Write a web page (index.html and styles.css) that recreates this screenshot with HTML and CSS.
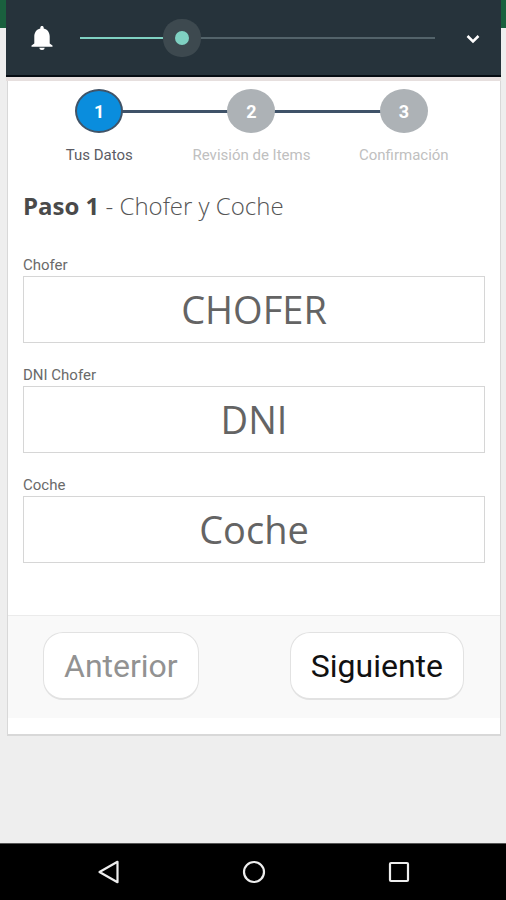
FILE: index.html
```html
<!DOCTYPE html>
<html lang="es">
<head>
<meta charset="utf-8">
<meta name="viewport" content="width=device-width, initial-scale=1">
<title>Paso 1 - Chofer y Coche</title>
<link rel="stylesheet" href="styles.css">
</head>
<body>
<div class="topbar"></div>
<section class="volume" aria-label="Volumen">
  <svg class="volume-icon" viewBox="0 0 24 24" aria-hidden="true"><path d="M12 24c1.500 0 2.600-1 2.600-2.300H9.400C9.400 23 10.500 24 12 24z"/><path d="M12 0c-1 0-1.700.7-1.700 1.700v.8C6.500 3.400 4.300 6.500 4.300 10.500v7L1.500 19.500v1.300h21v-1.300l-2.800-2v-7c0-4-2.200-7.100-6-8v-.8C13.700.7 13 0 12 0z"/></svg>
  <input class="volume-range" type="range" min="0" max="100" value="28" aria-label="Volumen de notificaciones">
  <button class="volume-more" type="button" aria-label="Expandir"><svg viewBox="0 0 24 24" aria-hidden="true"><path d="M6.500 10l5.500 5.500 5.500-5.500"/></svg></button>
</section>
<main class="card">
  <ol class="steps">
    <li class="step step-active"><span class="step-number">1</span><span class="step-label">Tus Datos</span></li>
    <li class="step"><span class="step-number">2</span><span class="step-label">Revisión de Items</span></li>
    <li class="step"><span class="step-number">3</span><span class="step-label">Confirmación</span></li>
  </ol>
  <form class="form">
    <div class="fields">
      <h1 class="title"><strong>Paso 1</strong> - Chofer y Coche</h1>
      <div class="field"><label for="chofer">Chofer</label><input id="chofer" type="text" placeholder="CHOFER"></div>
      <div class="field"><label for="dni">DNI Chofer</label><input id="dni" type="text" placeholder="DNI"></div>
      <div class="field"><label for="coche">Coche</label><input id="coche" type="text" placeholder="Coche"></div>
    </div>
    <div class="actions">
      <button class="button" type="button" disabled>Anterior</button>
      <button class="button" type="button">Siguiente</button>
    </div>
  </form>
</main>
<nav class="navbar" aria-label="Sistema">
  <button type="button" aria-label="Atrás"><svg viewBox="0 0 24 24"><path d="M20.500 1.800v20.400L2.500 12z"/></svg></button>
  <button type="button" aria-label="Inicio"><svg viewBox="0 0 24 24"><circle cx="12" cy="12" r="10"/></svg></button>
  <button type="button" aria-label="Recientes"><svg viewBox="0 0 24 24"><rect x="3" y="3" width="18" height="18" rx="1"/></svg></button>
</nav>
</body>
</html>
```
FILE: styles.css
```css
* {
  box-sizing: border-box;
}

body {
  margin: 0;
  min-height: 100vh;
  display: flex;
  flex-direction: column;
  position: relative;
  background: #eeeeee;
  color: #555555;
  font-family: Roboto, "Liberation Sans", sans-serif;
}

button {
  font: inherit;
  background: none;
  border: 0;
  padding: 0;
}

.topbar {
  height: 28px;
  background: #1a603e;
}

/* Volume panel floating over the page */
.volume {
  position: absolute;
  top: 0;
  left: 6px;
  right: 5px;
  height: 77px;
  display: flex;
  align-items: center;
  gap: 26px;
  padding: 1px 16px 0 24px;
  background: #26333b;
  border-bottom: 2px solid #050c12;
  box-shadow: 0 4px 0 #e6dfde;
}

.volume-icon {
  width: 24px;
  height: 24px;
  fill: #ffffff;
}

.volume-range {
  appearance: none;
  flex: 1;
  min-width: 0;
  height: 38px;
  margin: 0;
  background: none;
}

.volume-range::-webkit-slider-runnable-track {
  height: 2px;
  background: linear-gradient(to right, #7fd1c2 29%, #53636a 29%);
}

.volume-range::-webkit-slider-thumb {
  appearance: none;
  width: 14px;
  height: 14px;
  margin-top: -6px;
  border-radius: 50%;
  background: #7fd1c2;
  box-shadow: 0 0 0 12px #3d494f;
}

.volume-more,
.volume-more svg {
  display: block;
  width: 24px;
  height: 24px;
}

.volume-more svg {
  fill: none;
  stroke: #ffffff;
  stroke-width: 2.5;
}

/* Wizard card */
.card {
  margin: 0 5px 0 7px;
  padding: 61px 0 16px;
  background: #ffffff;
  border: solid #d8d8d8;
  border-width: 0 1px 2px;
}

.steps {
  list-style: none;
  margin: 0;
  padding: 0 20px 0 15px;
  display: grid;
  grid-template-columns: repeat(3, 1fr);
}

.step {
  position: relative;
  display: flex;
  flex-direction: column;
  align-items: center;
  gap: 12px;
  color: #c0c0c0;
}

.step + .step::before {
  content: "";
  position: absolute;
  top: 21px;
  right: 50%;
  width: 100%;
  height: 3px;
  background: #3f5268;
}

.step-number {
  position: relative;
  z-index: 1;
  width: 48px;
  height: 44px;
  display: flex;
  align-items: center;
  justify-content: center;
  border-radius: 50%;
  background: #adb2b6;
  color: #ffffff;
  font-size: 18px;
  font-weight: 700;
}

.step-active {
  color: #5c5c64;
}

.step-active .step-number {
  background: #0a8ddd;
  border: 2px solid #405468;
}

.step-label {
  font-size: 15px;
  line-height: 20px;
  white-space: nowrap;
}

.fields {
  padding: 23px 15px 52px;
}

.title {
  margin: 0 0 31px;
  font: 300 24px/36px "Open Sans", sans-serif;
  color: #555555;
}

.title strong {
  font-weight: 700;
  color: #4a4a4a;
}

.field + .field {
  margin-top: 22px;
}

.field label {
  display: block;
  font-size: 15px;
  line-height: 21px;
  color: #6a6a6a;
}

.field input {
  display: block;
  width: 100%;
  height: 67px;
  padding: 0 16px 1px;
  border: 1px solid #d6d6d6;
  background: #ffffff;
  text-align: center;
  font: 400 38px "Open Sans", sans-serif;
  color: #5c5c5c;
}

.field input::placeholder {
  color: #646464;
}

.actions {
  display: flex;
  justify-content: space-between;
  padding: 16px 36px 18px 35px;
  background: #f9f9f9;
  border-top: 1px solid #ebebeb;
}

.button {
  height: 68px;
  padding: 0 20px;
  border: 1px solid #e2e2e2;
  border-bottom-width: 2px;
  border-radius: 20px;
  background: #ffffff;
  color: #111111;
  font-size: 32px;
}

.button:disabled {
  color: #929292;
}

/* System navigation */
.navbar {
  margin-top: auto;
  height: 57px;
  padding: 0 35px 0 37px;
  display: grid;
  grid-template-columns: repeat(3, 1fr);
  align-items: center;
  justify-items: center;
  background: #000000;
  border-top: 1px solid #555555;
}

.navbar button,
.navbar svg {
  display: block;
  width: 24px;
  height: 24px;
}

.navbar svg {
  fill: none;
  stroke: #eeeeee;
  stroke-width: 2.2;
  stroke-linejoin: round;
}
```
